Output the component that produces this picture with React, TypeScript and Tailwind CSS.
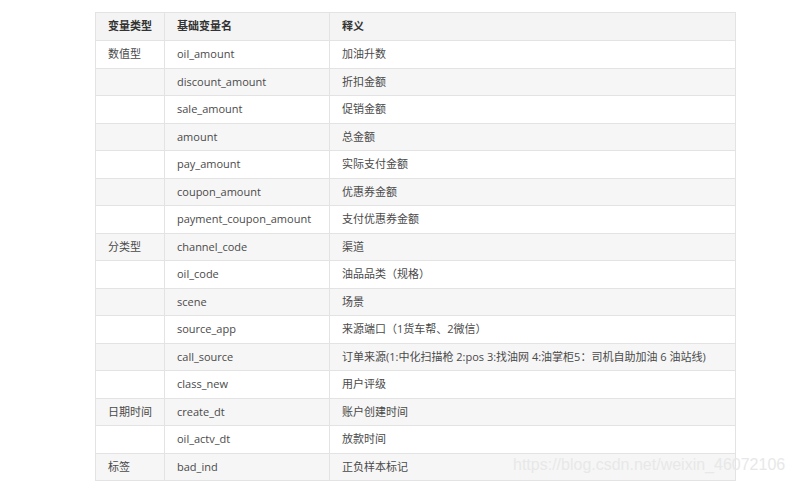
const rows: [string, string, string][] = [
  ["数值型", "oil_amount", "加油升数"],
  ["", "discount_amount", "折扣金额"],
  ["", "sale_amount", "促销金额"],
  ["", "amount", "总金额"],
  ["", "pay_amount", "实际支付金额"],
  ["", "coupon_amount", "优惠券金额"],
  ["", "payment_coupon_amount", "支付优惠券金额"],
  ["分类型", "channel_code", "渠道"],
  ["", "oil_code", "油品品类（规格）"],
  ["", "scene", "场景"],
  ["", "source_app", "来源端口（1货车帮、2微信）"],
  ["", "call_source", "订单来源(1:中化扫描枪 2:pos 3:找油网 4:油掌柜5：司机自助加油 6 油站线)"],
  ["", "class_new", "用户评级"],
  ["日期时间", "create_dt", "账户创建时间"],
  ["", "oil_actv_dt", "放款时间"],
  ["标签", "bad_ind", "正负样本标记"],
];

export default function App() {
  return (
    <div
      className="relative w-[794px] h-[488px] bg-white overflow-hidden"
      style={{ fontFamily: '"Open Sans", "Noto Sans CJK SC", sans-serif' }}
    >
      <table className="absolute left-[95px] top-[12px] w-[641px] table-fixed border-collapse text-[11px] text-[#4a4a4a]">
        <colgroup>
          <col className="w-[69px]" />
          <col className="w-[165px]" />
          <col />
        </colgroup>
        <thead>
          <tr className="h-[28px] bg-[#f4f4f4] text-[#333]">
            <th className="border border-[#e3e3e3] px-3 text-left font-bold">变量类型</th>
            <th className="border border-[#e3e3e3] px-3 text-left font-bold">基础变量名</th>
            <th className="border border-[#e3e3e3] px-3 text-left font-bold">释义</th>
          </tr>
        </thead>
        <tbody>
          {rows.map((r, i) => (
            <tr key={i} className={i % 2 === 0 ? "h-[27.5px] bg-white" : "h-[27.5px] bg-[#f6f6f6]"}>
              <td className="border border-[#e3e3e3] px-3 whitespace-nowrap">{r[0]}</td>
              <td className="border border-[#e3e3e3] px-3 whitespace-nowrap">{r[1]}</td>
              <td className="border border-[#e3e3e3] px-3 whitespace-nowrap">{r[2]}</td>
            </tr>
          ))}
        </tbody>
      </table>
      <div
        className="absolute left-[513px] top-[457px] text-[16px] leading-none text-[#e8e8e8] whitespace-nowrap"
        style={{ fontFamily: '"Liberation Sans", Arial, sans-serif' }}
      >
        https://blog.csdn.net/weixin_46072106
      </div>
    </div>
  );
}
